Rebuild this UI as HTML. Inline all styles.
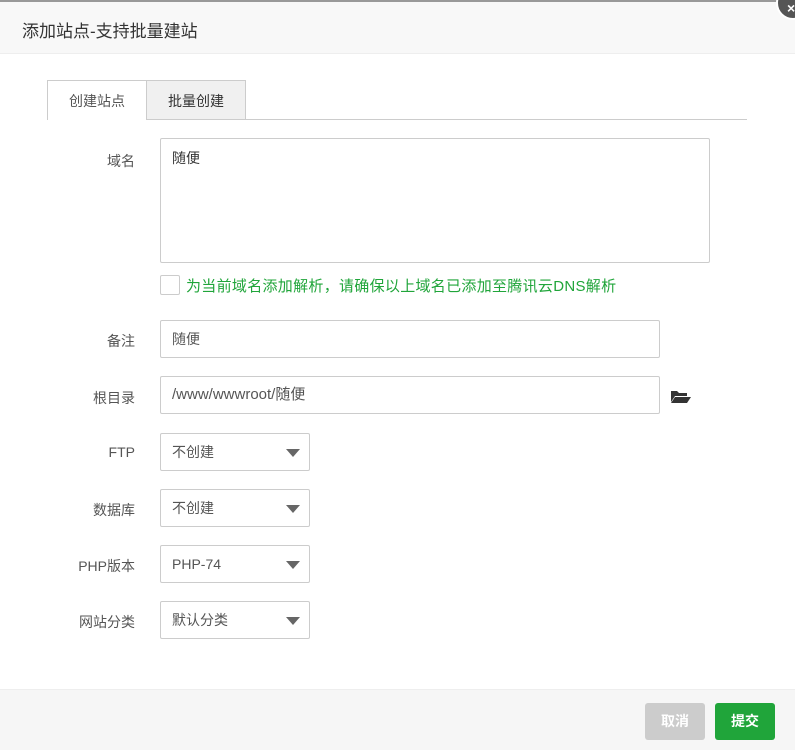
<!DOCTYPE html>
<html><head><meta charset="utf-8"><style>
*{box-sizing:border-box;margin:0;padding:0}
body{width:795px;height:750px;background:#fff;font-family:"Liberation Sans","Noto Sans CJK SC",sans-serif;font-size:14px;color:#555;position:relative;overflow:hidden}
.a{position:absolute}
.hdr{left:0;top:0;width:795px;height:54px;background:#f8f8f8;border-top:2px solid #999;border-bottom:1px solid #eee}
.lbl{width:135px;text-align:right;color:#555;font-size:14px}
.inp{border:1px solid #ccc;border-radius:2px;background:#fff;color:#555;padding-left:11px;line-height:36px;height:38px}
.sel{width:150px}
.sel:after{content:"";position:absolute;right:9px;top:15px;border-left:7px solid transparent;border-right:7px solid transparent;border-top:8px solid #666}
</style></head><body>
<div class="a hdr"></div>
<div class="a" style="left:22px;top:17px;font-size:17px;color:#333">添加站点-支持批量建站</div>
<div class="a" style="left:776px;top:-14px;width:34px;height:34px;border-radius:50%;background:#555;border:2px solid #fff"></div>
<div class="a" style="left:787px;top:0px;color:#fff;font-size:14px;font-weight:bold">×</div>
<div class="a" style="left:47px;top:119px;width:700px;height:1px;background:#ccc"></div>
<div class="a" style="left:47px;top:80px;width:100px;height:40px;background:#fff;border:1px solid #ccc;border-bottom:none;text-align:center;line-height:40px;color:#555">创建站点</div>
<div class="a" style="left:146px;top:80px;width:100px;height:39px;background:#f0f0f0;border:1px solid #ccc;border-bottom:none;text-align:center;line-height:40px;color:#333">批量创建</div>

<div class="a lbl" style="left:0;top:151px">域名</div>
<div class="a" style="left:160px;top:138px;width:550px;height:125px;border:1px solid #ccc;border-radius:2px;padding:9px 11px;color:#333">随便</div>
<div class="a" style="left:160px;top:275px;width:20px;height:20px;border:1px solid #ccc;border-radius:2px"></div>
<div class="a" style="left:186px;top:275px;color:#20a53a;font-size:15px;letter-spacing:0.3px">为当前域名添加解析，请确保以上域名已添加至腾讯云DNS解析</div>

<div class="a lbl" style="left:0;top:331px">备注</div>
<div class="a inp" style="left:160px;top:320px;width:500px">随便</div>
<div class="a lbl" style="left:0;top:388px">根目录</div>
<div class="a inp" style="left:160px;top:376px;width:500px;font-size:15px">/www/wwwroot/随便</div>
<svg class="a" style="left:671px;top:389px" width="20" height="15" viewBox="0 0 20 15"><path d="M0 2h6l2 2h8v3H4L0 13z" fill="#333"/><path d="M4 8h16l-4 6H0z" fill="#333"/></svg>

<div class="a lbl" style="left:0;top:444px">FTP</div>
<div class="a inp sel" style="left:160px;top:433px">不创建</div>
<div class="a lbl" style="left:0;top:500px">数据库</div>
<div class="a inp sel" style="left:160px;top:489px">不创建</div>
<div class="a lbl" style="left:0;top:556px">PHP版本</div>
<div class="a inp sel" style="left:160px;top:545px">PHP-74</div>
<div class="a lbl" style="left:0;top:612px">网站分类</div>
<div class="a inp sel" style="left:160px;top:601px">默认分类</div>

<div class="a" style="left:0;top:689px;width:795px;height:61px;background:#f6f6f6;border-top:1px solid #eee"></div>
<div class="a" style="left:645px;top:703px;width:60px;height:37px;background:#ccc;border-radius:3px;color:#fff;font-weight:bold;text-align:center;line-height:37px">取消</div>
<div class="a" style="left:715px;top:703px;width:60px;height:37px;background:#20a53a;border-radius:3px;color:#fff;font-weight:bold;text-align:center;line-height:37px">提交</div>
</body></html>
